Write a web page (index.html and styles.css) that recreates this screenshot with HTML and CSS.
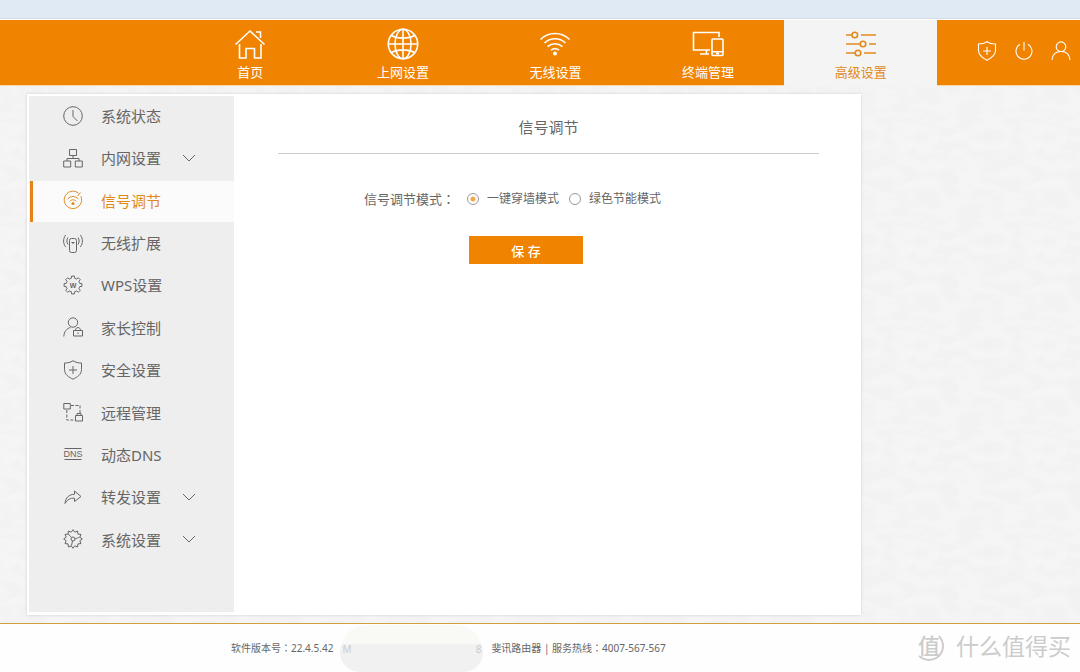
FILE: index.html
```
<!DOCTYPE html>
<html lang="zh-CN">
<head>
<meta charset="utf-8">
<meta name="viewport" content="width=device-width, initial-scale=1">
<title>信号调节</title>
<link rel="stylesheet" href="styles.css">
</head>
<body>
<div class="topstrip"></div>
<header class="header">
  <nav class="nav">
    <a class="nav-item" href="#"><svg class="nav-icon" viewBox="0 0 32 32"><path d="M1.500 16.500 16 3 30.500 16.500M5.500 16v14h6.500V20.500h8.500V30h6.500V16M22 4h4.500v6"/></svg><span>首页</span></a>
    <a class="nav-item" href="#"><svg class="nav-icon" viewBox="0 0 32 32"><circle cx="16" cy="16" r="14.700"/><ellipse cx="16" cy="16" rx="8" ry="14.700"/><path d="M16 1.300v29.400M1.300 16h29.400M4.500 7.500c6 3.500 17 3.500 23 0M4.500 24.500c6-3.500 17-3.500 23 0"/></svg><span>上网设置</span></a>
    <a class="nav-item" href="#"><svg class="nav-icon" viewBox="0 0 32 32"><path d="M1.500 11.500c8-8 21-8 29 0M5.500 15c6-5.700 15-5.700 21 0M8.500 18.700c4.500-4 10.500-4 15 0M12 22.200c2.500-2 5.500-2 8 0"/><circle class="solid" cx="16" cy="25.500" r="2"/></svg><span>无线设置</span></a>
    <a class="nav-item" href="#"><svg class="nav-icon" viewBox="0 0 32 32"><path d="M18 22H1.500V4.500h25.500V9M14.500 22v3.500M8 26h9"/><rect x="20" y="11" width="11" height="16.500" rx="1"/><path d="M20 23.700h11M24 25.600h3"/></svg><span>终端管理</span></a>
    <a class="nav-item active" href="#"><svg class="nav-icon" viewBox="0 0 32 32"><path d="M1 7h5.500M16 7h15M1 16h14M24 16h7M1 25h9M19 25h12"/><circle cx="9.800" cy="7" r="2.800"/><circle cx="18" cy="16" r="2.800"/><circle cx="13" cy="25" r="2.800"/></svg><span>高级设置</span></a>
  </nav>
  <div class="tools">
    <button class="tool" type="button" aria-label="安全"><svg viewBox="0 0 20 20"><path d="M10 .7C7.500 2.500 4.500 3 1.500 3v6.500c0 5 4 7.500 8.500 9.700 4.500-2.200 8.500-4.700 8.500-9.700V3C15.500 3 12.500 2.500 10 .7z"/><path d="M10 6v8M6 10h8"/></svg></button>
    <button class="tool" type="button" aria-label="电源"><svg viewBox="0 0 20 20"><path d="M6 3.300a8 8 0 1 0 8 0M10 1v8.500"/></svg></button>
    <button class="tool" type="button" aria-label="用户"><svg viewBox="0 0 20 20"><circle cx="10" cy="5.700" r="4.800"/><path d="M1 19c.5-5.500 4-8.500 9-8.500s8.500 3 9 8.500"/></svg></button>
  </div>
</header>
<main class="main">
  <section class="panel">
    <nav class="menu-box">
      <ul class="menu">
        <li><a href="#"><svg class="icon" viewBox="0 0 20 20"><circle cx="10" cy="10" r="9.300"/><path d="M10 4v6.500l4.500 4.500"/></svg><span>系统状态</span></a></li>
        <li><a href="#"><svg class="icon" viewBox="0 0 20 20"><path d="M6.500 1.500h7v6h-7zM.700 13h7v6h-7zM12.300 13h7v6h-7zM10 7.500v3M4 13v-2.500h12V13"/></svg><span>内网设置</span><svg class="chevron" viewBox="0 0 14 8"><path d="M1 1l6 6 6-6"/></svg></a></li>
        <li><a class="active" href="#"><svg class="icon" viewBox="0 0 20 20"><path d="M15.500 3.200A8.700 8.700 0 1 0 17.800 6.200M14.500 6l3-3.500M4.700 9c3.200-3.300 7.400-3.300 10.600 0M6.700 11.300c2-2 4.600-2 6.600 0"/><circle class="solid" cx="10" cy="13.500" r="1.500"/></svg><span>信号调节</span></a></li>
        <li><a href="#"><svg class="icon" viewBox="0 0 20 20"><rect x="6.500" y="5.500" width="7" height="14" rx="2"/><path d="M8.500 9.500h3M10 9v2M5 4.500c-1.500 2-1.500 5 0 7M2.700 2c-2.800 3.500-2.800 8.500 0 12M15 4.500c1.500 2 1.500 5 0 7M17.300 2c2.800 3.500 2.800 8.500 0 12"/></svg><span>无线扩展</span></a></li>
        <li><a href="#"><svg class="icon" viewBox="0 0 20 20"><path d="M16.800 8.400l2.100.2v2.800l-2.100.2-.9 2.100 1.400 1.600-2 2-1.600-1.400-2.100.9-.2 2.100H8.600l-.2-2.100-2.100-.9-1.600 1.400-2-2 1.400-1.600-.9-2.100-2.100-.2V8.600l2.100-.2.900-2.100-1.400-1.600 2-2 1.600 1.400 2.100-.9.200-2.100h2.800l.2 2.100 2.100.9 1.600-1.400 2 2-1.400 1.600z"/><text x="10" y="12.500">W</text></svg><span>WPS设置</span></a></li>
        <li><a href="#"><svg class="icon" viewBox="0 0 20 20"><circle cx="10" cy="5.500" r="4.700"/><path d="M.8 19.500c.4-5 2.700-7.800 6.500-9M10.500 13.500h9v5.500h-9zM12.500 13.500c0-4 5-4 5 0M15 15.500v1.500"/></svg><span>家长控制</span></a></li>
        <li><a href="#"><svg class="icon" viewBox="0 0 20 20"><path d="M10 .7C7.500 2.500 4.500 3 1.500 3v6.500c0 5 4 7.500 8.500 9.700 4.500-2.200 8.500-4.700 8.500-9.700V3C15.500 3 12.500 2.500 10 .7z"/><path d="M10 6v8M6 10h8"/></svg><span>安全设置</span></a></li>
        <li><a href="#"><svg class="icon" viewBox="0 0 20 20"><path d="M.8 1.500h6.500v5.500H.8zM12.500 13.500h7V19h-7zM14 13.500v-2h4v2"/><path stroke-dasharray="3 1.500" d="M8 3.500h9V11M3.800 8v10H12"/></svg><span>远程管理</span></a></li>
        <li><a href="#"><svg class="icon" viewBox="0 0 20 20"><path d="M1.500 4.500h17M1.500 15.500h17"/><text class="dns" x="10" y="13.200">DNS</text></svg><span>动态DNS</span></a></li>
        <li><a href="#"><svg class="icon" viewBox="0 0 20 20"><path d="M2 16.500C2.500 10.500 6 7.500 11.500 7.300V4l6.500 5.500-6.500 5v-3.300C7 11 4.500 12.500 2 16.500z"/></svg><span>转发设置</span><svg class="chevron" viewBox="0 0 14 8"><path d="M1 1l6 6 6-6"/></svg></a></li>
        <li><a href="#"><svg class="icon" viewBox="0 0 20 20"><path d="M19.300 10l-2.500 1.800 1.200 2.800-3.100.3-.3 3.100-2.800-1.200L10 19.300l-1.800-2.500L5.400 18l-.3-3.100-3.100-.3 1.200-2.800L.7 10l2.500-1.800L2 5.400l3.100-.3L5.400 2l2.800 1.200L10 .7l1.800 2.500L14.600 2l.3 3.100 3.100.3-1.200 2.800z"/><circle cx="10" cy="10" r="2"/><path d="M8.500 8.500 5.300 5M12 10c2-.5 3-1.500 4.500-1.500M9.500 12l-1 4.500"/></svg><span>系统设置</span><svg class="chevron" viewBox="0 0 14 8"><path d="M1 1l6 6 6-6"/></svg></a></li>
      </ul>
    </nav>
    <div class="content">
      <h1 class="title">信号调节</h1>
      <form class="form">
        <div class="modes" role="radiogroup" aria-labelledby="mode-label">
          <span class="mode-label" id="mode-label">信号调节模式<span class="colon" lang="zh-TW">：</span></span>
          <label class="radio"><input type="radio" name="mode" checked><span>一键穿墙模式</span></label>
          <label class="radio"><input type="radio" name="mode"><span>绿色节能模式</span></label>
        </div>
        <button class="save" type="button">保 存</button>
      </form>
    </div>
  </section>
</main>
<footer class="footer">
  <span>软件版本号<span class="colon" lang="zh-TW">：</span>22.4.5.42</span>
  <span class="redacted"><span>M</span><span>8</span></span>
  <span>斐讯路由器 | 服务热线<span class="colon" lang="zh-TW">：</span>4007-567-567</span>
  <div class="watermark"><span class="seal">值</span><span>什么值得买</span></div>
</footer>
</body>
</html>
```
FILE: styles.css
```
* { box-sizing: border-box; }

body {
  margin: 0;
  min-height: 100vh;
  display: flex;
  flex-direction: column;
  color: #666;
  font-family: "Noto Sans", "Noto Sans CJK SC", sans-serif;
  font-size: 15px;
  background: #f5f5f5 url("data:image/svg+xml,%3Csvg xmlns='http://www.w3.org/2000/svg' width='128' height='104'%3E%3Cfilter id='p' x='0' y='0' width='100%25' height='100%25'%3E%3CfeTurbulence type='fractalNoise' baseFrequency='.05 .11' numOctaves='3' seed='4' stitchTiles='stitch'/%3E%3CfeColorMatrix values='0 0 0 0 .5 0 0 0 0 .5 0 0 0 0 .5 .16 0 0 0 -.06'/%3E%3C/filter%3E%3Crect width='128' height='104' filter='url(%23p)'/%3E%3C/svg%3E");
}

a { color: inherit; text-decoration: none; }
svg { fill: none; stroke: currentColor; flex: none; }
.colon { font-family: "Noto Sans CJK TC", sans-serif; }

.topstrip {
  height: 20px;
  background: #e0eaf5;
  border-bottom: 1px solid #fff;
  box-shadow: inset 0 -1px #d2dce6;
}

.header {
  display: flex;
  justify-content: space-between;
  height: 66px;
  padding-left: 174px;
  color: #fff;
  background: #f08300;
  border-bottom: 1px solid #f8d8a8;
}
.nav { display: grid; grid-template-columns: repeat(5, 1fr); flex: 0 1 763px; }
.nav-item {
  display: flex;
  flex-direction: column;
  align-items: center;
  gap: 2px;
  padding-top: 8px;
  font-size: 13px;
  line-height: 20px;
}
.nav-item.active { color: #e08a1e; background: #f4f4f4; margin-bottom: -1px; }
.nav-icon { width: 32px; height: 32px; stroke-width: 1.6; }
.solid { fill: currentColor; stroke: none; }

.tools { display: flex; align-items: center; gap: 17px; padding: 0 9px 4px 0; }
.tool { width: 20px; height: 20px; padding: 0; border: 0; background: none; color: #fff; }
.tool svg { display: block; width: 20px; height: 20px; stroke-width: 1.1; }

.main { flex: 1; display: flex; padding: 8px 219px 8px 27px; }
.panel {
  flex: 1;
  display: flex;
  padding: 2px;
  background: #fff;
  box-shadow: 0 0 3px rgba(0, 0, 0, .14);
}

.menu-box { flex: none; width: 205px; margin-bottom: 1px; background: #eee; }
.menu {
  display: grid;
  grid-auto-rows: 1fr;
  height: 466px;
  margin: 0;
  padding: 0;
  list-style: none;
}
.menu a {
  display: flex;
  align-items: center;
  height: 41px;
  margin-left: 1px;
  padding: 0 0 2px 30px;
  border-left: 3px solid transparent;
}
.menu a.active { color: #e08a1e; background: #fbfbfb; border-left-color: #e8831a; }
.icon { width: 20px; height: 20px; margin-right: 18px; stroke-width: 1; }
.icon text {
  fill: currentColor;
  stroke: none;
  text-anchor: middle;
  font: bold 7px "Liberation Sans", sans-serif;
}
.icon .dns { font-size: 9px; font-weight: normal; }
.chevron { width: 14px; height: 8px; margin-left: 21px; }

.content { flex: 1; padding: 0 40px 0 44px; }
.title {
  margin: 0;
  padding: 20px 0 15px;
  border-bottom: 1px solid #ccc;
  text-align: center;
  font-size: 15px;
  font-weight: 400;
  line-height: 22px;
}
.form { display: flex; flex-direction: column; align-items: flex-start; padding: 35px 0 0 86px; gap: 27px; }
.modes { display: flex; align-items: center; line-height: 20px; }
.mode-label { font-size: 13px; margin-right: 12px; }
.radio { display: flex; align-items: center; gap: 8px; margin-right: 10px; font-size: 12px; }
.radio input {
  appearance: none;
  width: 12px;
  height: 12px;
  margin: 0;
  border: 1px solid #999;
  border-radius: 50%;
  background: #fff;
}
.radio input:checked { background: radial-gradient(circle, #f2a64a 0 2px, #fff 3px); }
.save {
  width: 114px;
  height: 28px;
  margin-left: 105px;
  padding: 0;
  border: 0;
  color: #fff;
  background: #f08300;
  font: 500 13px "Noto Sans", "Noto Sans CJK SC", sans-serif;
}

.footer {
  position: relative;
  display: flex;
  align-items: center;
  height: 49px;
  padding-left: 231px;
  border-top: 1px solid #d0a040;
  background: #fefefe;
  font-size: 10px;
  line-height: 16px;
}
.redacted {
  display: flex;
  align-items: center;
  justify-content: space-between;
  align-self: stretch;
  width: 143px;
  margin: 1px 8px 0 7px;
  padding: 0 2px;
  border-radius: 56px 56px 40px 40px;
  color: #ccc;
  background: linear-gradient(#f9f9f6 18px, #f1f1f1 20px);
}
.watermark {
  position: absolute;
  right: 9px;
  top: 6px;
  display: flex;
  align-items: center;
  gap: 12px;
  color: #ccc;
  font-size: 23px;
  line-height: 32px;
}
.seal {
  width: 30px;
  height: 30px;
  border: 2px solid #ccc;
  border-color: transparent #ccc #ccc transparent;
  border-radius: 50%;
  text-align: center;
  font-size: 22px;
  font-weight: 500;
  line-height: 24px;
}
```
